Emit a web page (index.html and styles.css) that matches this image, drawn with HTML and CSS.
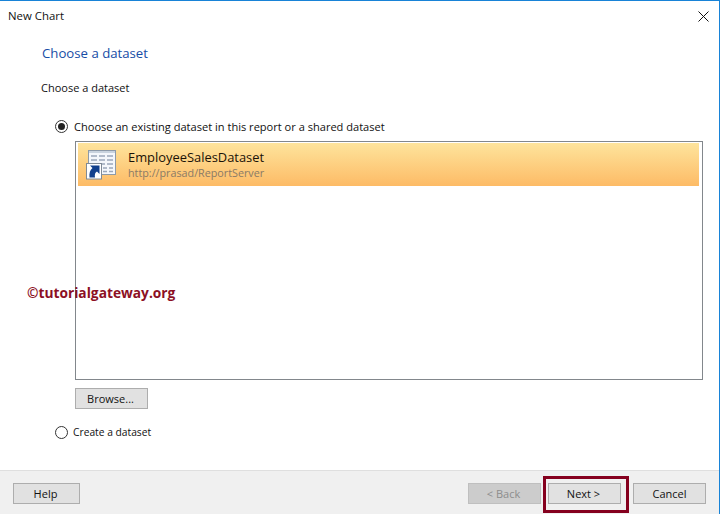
FILE: index.html
```html
<!DOCTYPE html>
<html lang="en">
<head>
<meta charset="utf-8">
<title>New Chart</title>
<link rel="stylesheet" href="styles.css">
</head>
<body>
<div class="dialog">
  <header class="titlebar">
    <span class="title">New Chart</span>
    <svg class="close" width="11" height="11" viewBox="0 0 11 11"><path d="M.5.5l10 10M10.500.5l-10 10" stroke="#111" stroke-width="1" fill="none"/></svg>
  </header>
  <main class="content">
    <h1 class="heading">Choose a dataset</h1>
    <p class="label">Choose a dataset</p>
    <div class="radio-row first">
      <span class="radio checked"></span>
      <span class="radio-text">Choose an existing dataset in this report or a shared dataset</span>
    </div>
    <div class="listbox">
      <div class="item">
        <svg class="item-icon" width="30" height="30" viewBox="0 0 30 30">
          <rect x="2.500" y="0.500" width="27" height="24" fill="#f4f7fb" stroke="#8d9aa8"/>
          <rect x="3" y="1" width="26" height="2" fill="#c9d3de"/>
          <path d="M5 6h6M13 6h6M21 6h6M5 10h6M13 10h6M21 10h6M5 14h6M13 14h6M21 14h6M17 18h4M23 18h4M17 21.500h4M23 21.500h4" stroke="#9aa8bb" stroke-width="1.300"/>
          <rect x="0.500" y="13.500" width="15" height="15.500" fill="#fff" stroke="#7f8a96"/>
          <path d="M3.500 27.500c-.5-4.500 .5-7.500 3-9.500l-2.500-2.500h9.500v8.500l-2.500-2.500c-2 1-2.500 3-2 6z" fill="#12408c"/>
        </svg>
        <div class="item-text">
          <div class="item-name">EmployeeSalesDataset</div>
          <div class="item-url">http://prasad/ReportServer</div>
        </div>
      </div>
    </div>
    <button class="btn browse" type="button">Browse...</button>
    <div class="radio-row second">
      <span class="radio"></span>
      <span class="radio-text narrow">Create a dataset</span>
    </div>
  </main>
  <footer class="footer">
    <button class="btn" type="button">Help</button>
    <div class="nav">
      <button class="btn disabled" type="button">&lt; Back</button>
      <button class="btn next" type="button">Next &gt;</button>
      <button class="btn cancel" type="button">Cancel</button>
    </div>
  </footer>
  <div class="watermark">©tutorialgateway.org</div>
  <div class="highlight"></div>
</div>
</body>
</html>
```
FILE: styles.css
```css
* { box-sizing: border-box; }
html, body { margin: 0; padding: 0; }
body {
  width: 720px;
  height: 514px;
  overflow: hidden;
  background: #fff;
  font-family: "Open Sans", "Noto Sans", sans-serif;
  font-size: 11px;
  color: #111;
}
.dialog {
  position: relative;
  width: 720px;
  height: 514px;
  display: flex;
  flex-direction: column;
  border-top: 1px solid #1883d7;
  border-right: 1px solid #1883d7;
}
.titlebar {
  height: 30px;
  flex: none;
  display: flex;
  align-items: center;
  justify-content: space-between;
  padding: 0 10px 0 8px;
}
.title { font-size: 11.400px; line-height: 30px; }
.close { display: block; }
.content {
  flex: 1;
  display: flex;
  flex-direction: column;
  align-items: flex-start;
  padding-left: 42px;
}
.heading {
  margin: 12px 0 0;
  font-size: 13.200px;
  line-height: 20px;
  font-weight: 400;
  color: #174da6;
}
.label {
  margin: 17px 0 0 -1px;
  line-height: 15px;
  font-size: 11px;
}
.radio-row {
  display: flex;
  align-items: center;
  gap: 6px;
  margin-left: 13px;
  height: 16px;
}
.radio-row.first { margin-top: 23px; }
.radio-row.second { margin-top: 15px; gap: 5px; }
.radio {
  width: 13px;
  height: 13px;
  border: 1px solid #333;
  border-radius: 50%;
  background: #fff;
  flex: none;
  display: flex;
  align-items: center;
  justify-content: center;
}
.radio.checked::after {
  content: "";
  width: 7px;
  height: 7px;
  border-radius: 50%;
  background: #222;
}
.radio-text { font-size: 11.070px; }
.radio-text.narrow { font-size: 10.250px; }
.listbox {
  margin: 7px 0 0 33px;
  width: 628px;
  height: 239px;
  border: 1px solid #82878c;
  padding: 1px 3px 0 2px;
  background: #fff;
}
.item {
  height: 43px;
  display: flex;
  align-items: center;
  gap: 12px;
  padding: 0 0 0 8px;
  background: linear-gradient(#fee49c, #fdbb66);
}
.item-icon { flex: none; width: 30px; height: 30px; }
.item-text { display: flex; flex-direction: column; }
.item-name { font-size: 12.900px; line-height: 17px; color: #1a1207; }
.item-url { font-size: 10.750px; line-height: 15px; color: #8a7a66; }
.btn {
  display: block;
  width: 73px;
  height: 21px;
  padding: 0 2px 0 0;
  background: #e1e1e1;
  border: 1px solid #adadad;
  border-radius: 0;
  font-family: inherit;
  font-size: 11px;
  line-height: 19px;
  color: #111;
}
.browse { margin: 8px 0 0 33px; }
.footer {
  height: 44px;
  flex: none;
  background: #f0f0f0;
  border-top: 1px solid #dfdfdf;
  display: flex;
  justify-content: space-between;
  align-items: flex-start;
  padding: 12px 13px 0 13px;
}
.footer > .btn { width: 67px; }
.nav { display: flex; }
.disabled { background: #cccccc; border-color: #bfbfbf; color: #8c8c8c; }
.next { margin-left: 7px; }
.cancel { margin-left: 12px; padding-right: 0; }
.watermark {
  position: absolute;
  left: 27px;
  top: 283px;
  font-size: 13.750px;
  line-height: 18px;
  font-weight: 700;
  color: #8c0f24;
}
.highlight {
  position: absolute;
  left: 543px;
  top: 475px;
  width: 86px;
  height: 37px;
  border: 3px solid #85001e;
}
```
